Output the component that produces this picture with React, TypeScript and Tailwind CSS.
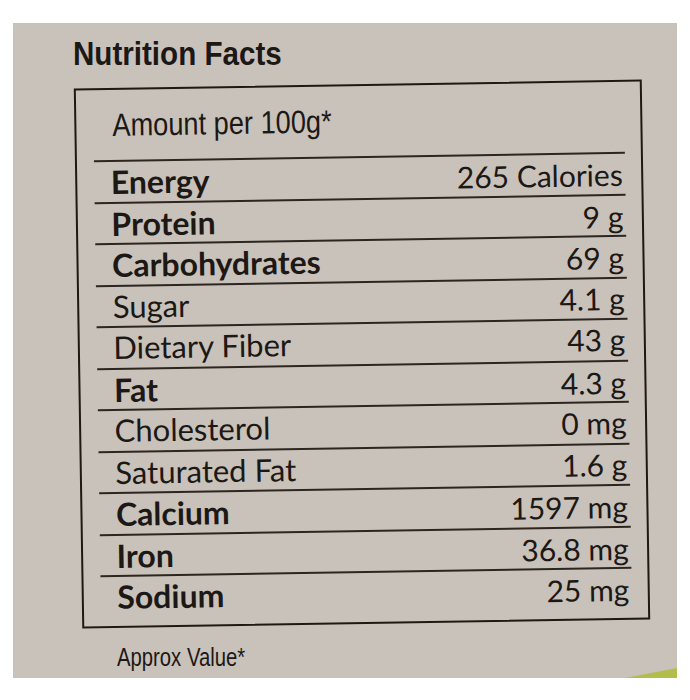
import React from 'react';

interface Fila {
  nombre: string;
  valor: string;
  negrita?: boolean;
}

const filas: Fila[] = [
  { nombre: 'Energy', valor: '265 Calories', negrita: true },
  { nombre: 'Protein', valor: '9 g', negrita: true },
  { nombre: 'Carbohydrates', valor: '69 g', negrita: true },
  { nombre: 'Sugar', valor: '4.1 g' },
  { nombre: 'Dietary Fiber', valor: '43 g' },
  { nombre: 'Fat', valor: '4.3 g', negrita: true },
  { nombre: 'Cholesterol', valor: '0 mg' },
  { nombre: 'Saturated Fat', valor: '1.6 g' },
  { nombre: 'Calcium', valor: '1597 mg', negrita: true },
  { nombre: 'Iron', valor: '36.8 mg', negrita: true },
  { nombre: 'Sodium', valor: '25 mg', negrita: true }
];

const App: React.FC = () => {
  return (
    <div className="min-h-[700px] bg-white pt-[23px] pl-[13px]">
      {/* Etiqueta */}
      <div className="relative h-[655px] w-[664px] overflow-hidden bg-[#c9c2ba] pl-[60px] pt-[12.6px] text-[#1c1815]">
        <h1 className="font-['Liberation_Sans',sans-serif] text-[34px] font-bold leading-[34px]">
          <span className="inline-block origin-left scale-x-[0.87]">Nutrition Facts</span>
        </h1>

        {/* Caja de la tabla */}
        <div className="ml-[5px] mt-[14px] h-[540px] w-[568px] rotate-[-0.9deg] border-[2.5px] border-[#1d1915]">
          <div className="mx-[16.5px] border-b-2 border-[#2c2520] pb-[19px] pl-[19px] pt-[19px] font-['Liberation_Sans',sans-serif] text-[32px] leading-[32px]">
            <span className="inline-block origin-left scale-x-[0.85]">Amount per 100g*</span>
          </div>

          {filas.map((fila, indice) => {
            const esUltima = indice === filas.length - 1;
            return (
              <div
                key={fila.nombre}
                className={`mx-[16.5px] flex h-[41.5px] items-baseline justify-between pl-[17px] pr-[2px] font-['Lato',sans-serif] leading-[39.5px] ${
                  esUltima ? '' : 'border-b-2 border-[#2c2520]'
                }`}
              >
                <span className={fila.negrita ? 'text-[32px] font-bold' : 'text-[31px] font-normal'}>
                  {fila.nombre}
                </span>
                <span className="text-[30px]">{fila.valor}</span>
              </div>
            );
          })}
        </div>

        <p className="ml-[44px] mt-[20px] font-['Liberation_Sans',sans-serif] text-[26px] leading-[26px]">
          <span className="inline-block origin-left scale-x-[0.78]">Approx Value*</span>
        </p>

        {/* Borde verde del envase */}
        <div className="absolute bottom-0 right-0 h-[10px] w-[52px] bg-[#b3bd4c] [clip-path:polygon(100%_0,100%_100%,0_100%)]" />
      </div>
    </div>
  );
};

export default App;
